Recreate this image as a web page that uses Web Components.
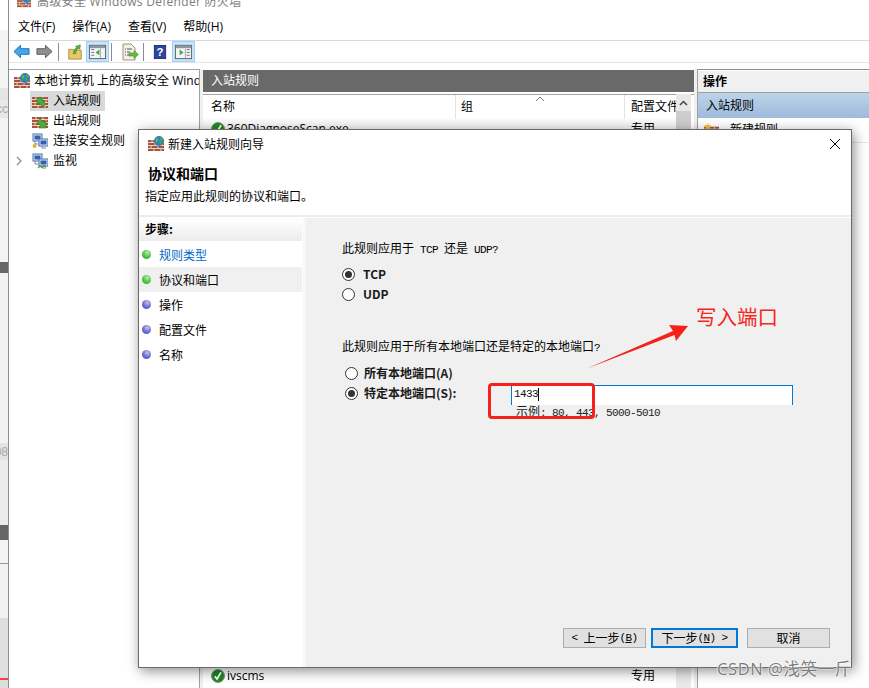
<!DOCTYPE html>
<html lang="zh">
<head>
<meta charset="utf-8">
<title>新建入站规则向导</title>
<style>
  html, body { margin: 0; height: 688px; overflow: hidden; background: #fff; }
  body { display: flex; font: 12px/16px "Open Sans", "Noto Sans CJK SC", sans-serif; color: #000; }
</style>
</head>
<body>
<side-strip></side-strip>
<mmc-window></mmc-window>
<wizard-dialog></wizard-dialog>
<photo-markup></photo-markup>

<script>
const BRICK = `<rect x="0" y="4" width="16" height="11" fill="#a8523a"/>
  <path d="M0 6.5h16M0 9.5h16M0 12.5h16M4 4v2.5M11 4v2.5M7 6.5v3M14 6.5v3M3 9.5v3M10 9.5v3M6 12.5v2.5M13 12.5v2.5" stroke="#e4d3c6" stroke-width="1" fill="none"/>`;
const GLOBE = `<circle cx="11" cy="5" r="5" fill="#2f7fd0"/><path d="M8 1.5c2 .5 3 1.5 2.5 3S8 6 8 7.500M12 .5c1 1.500 3 1.500 3.500 3.500-1.500 1-3.500 0-4 2 .5 1.500 1.500 2 2 3" fill="#5cb848" stroke="#3f9a3a" stroke-width=".7"/>`;
const MONITORS = `<rect x="1" y="1" width="9" height="7" fill="#dfe9f7" stroke="#53719c"/><rect x="2.500" y="2.500" width="6" height="4" fill="#2d62b8"/>
  <rect x="7" y="6" width="9" height="7" fill="#dfe9f7" stroke="#53719c"/><rect x="8.500" y="7.500" width="6" height="4" fill="#2d62b8"/>
  <path d="M3 8v3h4M10 13v2h4" stroke="#7a8aa0" fill="none"/>`;
const PANE = (arrow) => `<rect x="1.500" y="3.500" width="17" height="14" fill="#f4f4f4" stroke="#56606c"/><rect x="2" y="4" width="16" height="2.500" fill="#8a98a8"/>${arrow}`;

const ICONS = {
  root: `<svg viewBox="0 0 16 16">${BRICK}${GLOBE}</svg>`,
  inbound: `<svg viewBox="0 0 16 16">${BRICK}<path d="M5 5h7l-2 2 4 4-3 3-4-4-2 2z" fill="#48ad3c" stroke="#2f7e2a" stroke-width=".6"/></svg>`,
  outbound: `<svg viewBox="0 0 16 16">${BRICK}<path d="M14 15H7l2-2-4-4 3-3 4 4 2-2z" fill="#48ad3c" stroke="#2f7e2a" stroke-width=".6"/></svg>`,
  security: `<svg viewBox="0 0 16 16">${MONITORS}<circle cx="2.500" cy="13" r="2" fill="#d9b53a"/></svg>`,
  monitor: `<svg viewBox="0 0 16 16">${MONITORS}<path d="M6 15l2-2 2 1.500 2-2 2 1.500" stroke="#3f9a3a" stroke-width="1.200" fill="none"/></svg>`,
  newrule: `<svg viewBox="0 0 16 16">${BRICK}<path d="M4 0l1 2.500L8 2 6 4l1 2.500L4 5.500 1 6.500 2 4 0 2l3 .500z" fill="#f2c230"/></svg>`,
  check: `<svg viewBox="0 0 14 14"><circle cx="7" cy="7" r="6.500" fill="#1e8a1e" stroke="#8b938b"/><path d="M3.800 7.300l2.200 2.700L10 3.300" stroke="#fff" stroke-width="1.800" fill="none"/></svg>`,
  back: `<svg viewBox="0 0 18 16"><path d="M1 8l7-6.500V5h9v6H8v3.500z" fill="#46a6e8" stroke="#1c6fb4"/></svg>`,
  forward: `<svg viewBox="0 0 18 16"><path d="M17 8l-7-6.500V5H1v6h9v3.500z" fill="#8e8e8e" stroke="#5c5c5c"/></svg>`,
  up: `<svg viewBox="0 0 16 18"><path d="M1 6h5l1 1h8v10H1z" fill="#e9c76c" stroke="#a9893a"/><path d="M6 11c0-4 2-6 4-7L8.500 2.500 14 1l-.500 5-1.500-1c-2 1-3 3-3 6z" fill="#5fae3e" stroke="#3a822b" stroke-width=".6"/></svg>`,
  treeon: `<svg viewBox="0 0 20 20">${PANE('<path d="M3.500 8h3M3.500 11h3M3.500 14h3" stroke="#66707c"/><path d="M8 11l4-3v6z" fill="#3da84a"/><path d="M13 7v10" stroke="#9aa4ae"/>')}</svg>`,
  doc: `<svg viewBox="0 0 18 18"><path d="M2 1h8l4 4v12H2z" fill="#f4efe0" stroke="#9a9484"/><path d="M4 6h1M4 9h1M4 12h1M6 6h5M6 9h3M6 12h3" stroke="#555"/><path d="M8 10h5V7.500l4.500 4-4.500 4V13H8z" fill="#65bd45" stroke="#3e8f2c" stroke-width=".6"/></svg>`,
  help: `<svg viewBox="0 0 14 16"><rect x=".5" y=".5" width="13" height="15" fill="#2b469c" stroke="#1b2d70"/><text x="7" y="13" text-anchor="middle" font-family="Liberation Sans" font-weight="700" font-size="13" fill="#fff">?</text></svg>`,
  actionpane: `<svg viewBox="0 0 20 20">${PANE('<path d="M13.500 8h3M13.500 11h3M13.500 14h3" stroke="#66707c"/><path d="M6 8l4 3-4 3z" fill="#3da84a"/><path d="M12 7v10" stroke="#9aa4ae"/>')}</svg>`
};

class MmcIcon extends HTMLElement {
  connectedCallback() {
    const size = this.getAttribute('size') || 16;
    this.attachShadow({ mode: 'open' }).innerHTML = `
      <style>
        :host { display: block; flex: none; width: ${size}px; height: ${size}px; }
        svg { display: block; width: 100%; height: 100%; }
      </style>${ICONS[this.getAttribute('name')]}`;
  }
}
customElements.define('mmc-icon', MmcIcon);

// the bit of another window that shows left of the main one
class SideStrip extends HTMLElement {
  connectedCallback() {
    const bands = [
      [30, '#fff'], [58, '#f4f4f4'], [12, '#e4e4e4'], [18, '#e8e8e8', 'cc'], [144, '#f3f3f3'],
      [11, '#666'], [170, '#f2f2f2'], [17, '#e2e2e2', '08'], [65, '#ececec'], [15, '#666'],
      [23, '#f4f4f4'], [1, '#999'], [54, '#f2f2f2'], [60, '#dfdfdf'], [2, '#f0453a'], [8, '#ddd']
    ];
    this.attachShadow({ mode: 'open' }).innerHTML = `
      <style>
        :host { display: flex; flex: none; flex-direction: column; width: 8px; height: 688px; overflow: hidden; }
        i { display: flex; flex: none; justify-content: flex-end; align-items: center; overflow: hidden; font: 12px/14px "Liberation Sans", sans-serif; color: #aaa; }
      </style>
      ${bands.map(([h, c, t]) => `<i style="height:${h}px;background:${c}">${t || ''}</i>`).join('')}`;
  }
}
customElements.define('side-strip', SideStrip);

class MmcWindow extends HTMLElement {
  connectedCallback() {
    this.attachShadow({ mode: 'open' }).innerHTML = `
      <style>
        :host { display: flex; flex-direction: column; flex: 1; height: 688px; overflow: hidden; background: #fff; border-left: 1px solid #8b8b93; box-sizing: border-box; }
        .title { display: flex; flex: none; gap: 6px; height: 24px; padding-left: 8px; margin-top: -6px; color: #7c7c7c; align-items: flex-start; line-height: 16px; }
        .title span { letter-spacing: .3px; }
        .menu { display: flex; flex: none; gap: 17px; height: 20px; padding: 0 0 3px 9px; align-items: center; margin-top: -1px; }
        .tools { display: flex; flex: none; align-items: center; height: 21px; padding-left: 4px; border-top: 1px solid #d9d9d9; border-bottom: 1px solid #e4e4e4; }
        .sep { width: 1px; height: 18px; background: #8c8c8c; flex: none; }
        .on { display: flex; flex: none; width: 23px; height: 21px; align-items: center; justify-content: center; background: #cce4f7; border: 1px solid #99d1ff; box-sizing: border-box; }
        .panes { display: flex; flex: 1; min-height: 0; margin-top: 6px; background: #f0f0f0; gap: 3px; }
        .tree { flex: none; width: 190px; background: #fff; border: solid #a0a0a0; border-width: 1px 1px 0 0; overflow: hidden; white-space: nowrap; }
        .node { display: flex; align-items: center; height: 20px; gap: 5px; }
        .node.root { padding-left: 5px; margin-top: 1px; gap: 4px; }
        .node.kid { padding-left: 23px; }
        .sel { background: #d9d9d9; width: 75px; margin-left: 21px; padding-left: 2px !important; box-sizing: border-box; }
        .expand { display: flex; align-items: center; }
        .expand svg { margin-left: 7px; margin-right: 5px; }
        .list { display: flex; flex-direction: column; flex: none; width: 491px; background: #fff; overflow: hidden; }
        .bar { flex: none; height: 22px; margin-top: 1px; padding-left: 8px; background: #696969; color: #fff; line-height: 22px; }
        .heads { display: flex; flex: none; height: 25px; margin-top: 2px; border-top: 1px solid #a0a0a0; box-sizing: border-box; background: #fff; padding-left: 8px; align-items: center; }
        .heads div { border-left: 1px solid #e3e3e3; height: 24px; line-height: 24px; padding-left: 5px; box-sizing: border-box; }
        .heads .c1 { border: 0; padding: 0; width: 244px; }
        .heads .c2 { width: 169px; position: relative; }
        .heads .c3 { padding-left: 6px; width: 52px; overflow: hidden; white-space: nowrap; }
        .heads svg { position: absolute; top: 1px; left: 79px; }
        .rows { display: flex; flex: 1; min-height: 0; }
        .rowcol { flex: none; width: 473px; display: flex; flex-direction: column; }
        .row { display: flex; align-items: center; height: 20px; padding-left: 8px; background: linear-gradient(#fafafa, #ececec); }
        .row.last { margin-top: auto; background: none; height: 22px; margin-bottom: 1px; }
        .row span.n { width: 404px; padding-left: 2px; }
        .scroll { flex: none; width: 15px; background: #e9e9e9; margin-top: -25px; display: flex; flex-direction: column; position: relative; }
        .scroll .btn { flex: none; height: 17px; background: #e8e8e8; display: flex; align-items: center; justify-content: center; }
        .scroll .thumb { flex: none; height: 60px; background: #cdcdcd; }
        .actions { flex: 1; min-width: 0; background: #fff; border-left: 1px solid #a0a0a0; border-top: 1px solid #8e8e8e; }
        .acthead { height: 21px; margin-top: 1px; background: #f0f0f0; padding-left: 5px; line-height: 21px; font-weight: 700; border-bottom: 1px solid #a0a0a0; }
        .actband { height: 25px; line-height: 25px; padding-left: 8px; background: linear-gradient(#bcd3ea, #9ebbdb); }
        .actitem { display: flex; align-items: center; gap: 11px; height: 24px; padding-left: 6px; border-bottom: 1px solid #e8e8e8; }
      </style>
      <div class="title"><mmc-icon name="root" size="14"></mmc-icon><span>高级安全 Windows Defender 防火墙</span></div>
      <div class="menu"><span>文件(F)</span><span>操作(A)</span><span>查看(V)</span><span>帮助(H)</span></div>
      <div class="tools">
        <mmc-icon name="back" size="17"></mmc-icon>
        <mmc-icon name="forward" size="17" style="margin-left:6px"></mmc-icon>
        <div class="sep" style="margin:0 8px 0 5px"></div>
        <mmc-icon name="up" size="16"></mmc-icon>
        <div class="on" style="margin-left:3px"><mmc-icon name="treeon" size="19"></mmc-icon></div>
        <div class="sep" style="margin:0 9px 0 2px"></div>
        <mmc-icon name="doc" size="18"></mmc-icon>
        <div class="sep" style="margin:0 9px 0 4px"></div>
        <mmc-icon name="help" size="14"></mmc-icon>
        <div class="on" style="margin-left:5px"><mmc-icon name="actionpane" size="19"></mmc-icon></div>
      </div>
      <div class="panes">
        <div class="tree">
          <div class="node root"><mmc-icon name="root"></mmc-icon><span>本地计算机 上的高级安全 Wind</span></div>
          <div class="node kid sel"><mmc-icon name="inbound"></mmc-icon><span>入站规则</span></div>
          <div class="node kid"><mmc-icon name="outbound"></mmc-icon><span>出站规则</span></div>
          <div class="node kid"><mmc-icon name="security"></mmc-icon><span>连接安全规则</span></div>
          <div class="node expand"><svg width="6" height="10" viewBox="0 0 6 10"><path d="M1 1l4 4-4 4" stroke="#8a8a8a" stroke-width="1.200" fill="none"/></svg><mmc-icon name="monitor"></mmc-icon><span>监视</span></div>
        </div>
        <div class="list">
          <div class="bar">入站规则</div>
          <div class="heads">
            <div class="c1">名称</div>
            <div class="c2">组<svg width="10" height="6" viewBox="0 0 10 6"><path d="M1 5l4-4 4 4" stroke="#777" fill="none"/></svg></div>
            <div class="c3">配置文件</div>
          </div>
          <div class="rows">
            <div class="rowcol">
              <div class="row"><mmc-icon name="check" size="14"></mmc-icon><span class="n">360DiagnoseScan.exe</span><span>专用</span></div>
              <div class="row last"><mmc-icon name="check" size="14"></mmc-icon><span class="n">ivscms</span><span>专用</span></div>
            </div>
            <div class="scroll">
              <div class="btn"><svg width="9" height="6" viewBox="0 0 9 6"><path d="M1 5l3.500-3.500L8 5" stroke="#444" stroke-width="1.500" fill="none"/></svg></div>
              <div class="thumb"></div>
            </div>
          </div>
        </div>
        <div class="actions">
          <div class="acthead">操作</div>
          <div class="actband">入站规则</div>
          <div class="actitem"><mmc-icon name="newrule" size="15"></mmc-icon><span>新建规则...</span></div>
        </div>
      </div>`;
  }
}
customElements.define('mmc-window', MmcWindow);

class WizardStep extends HTMLElement {
  connectedCallback() {
    const state = this.getAttribute('state');
    const green = state === 'done' || state === 'current';
    const dot = green ? 'radial-gradient(circle at 60% 30%, #b4eeaa, #44c43a 55%, #35a82e)' : 'radial-gradient(circle at 60% 30%, #c3c3f0, #6868d0 55%, #5656b8)';
    this.attachShadow({ mode: 'open' }).innerHTML = `
      <style>
        :host { display: flex; align-items: center; gap: 8px; height: 25px; padding-left: 3px; box-sizing: border-box; margin-right: 1px; }
        :host([state="current"]) { background: #f0f0f0; }
        :host([state="done"]) { color: #0066cc; }
        i { display: block; width: 9px; height: 9px; border-radius: 50%; background: ${dot}; }
      </style><i></i><slot></slot>`;
  }
}
customElements.define('wizard-step', WizardStep);

class RadioOption extends HTMLElement {
  connectedCallback() {
    this.attachShadow({ mode: 'open' }).innerHTML = `
      <style>
        :host { display: flex; align-items: center; gap: var(--radio-gap, 8px); height: 20px; font-weight: 700; color: #1a1a1a; }
        i { display: flex; flex: none; align-items: center; justify-content: center; width: 13px; height: 13px; box-sizing: border-box; border: 1px solid #333; border-radius: 50%; background: #fff; }
        :host([checked]) i::after { content: ""; width: 7px; height: 7px; border-radius: 50%; background: #333; }
      </style><i></i><slot></slot>`;
  }
}
customElements.define('radio-option', RadioOption);

class WizardButton extends HTMLElement {
  connectedCallback() {
    this.attachShadow({ mode: 'open' }).innerHTML = `
      <style>
        :host { display: flex; align-items: center; justify-content: center; height: 20px; box-sizing: border-box; background: #e1e1e1; border: 1px solid #adadad; white-space: nowrap; }
        :host([primary]) { border: 2px solid #0078d7; }
      </style><slot></slot>`;
  }
}
customElements.define('wizard-button', WizardButton);

class WizardDialog extends HTMLElement {
  connectedCallback() {
    this.attachShadow({ mode: 'open' }).innerHTML = `
      <style>
        :host { position: absolute; left: 138px; top: 129px; width: 714px; height: 539px; box-sizing: border-box; display: flex; flex-direction: column; background: #fff; border: 1px solid #6a6a6a; box-shadow: 2px 3px 12px rgba(0,0,0,.45); font: 12px/16px "Noto Sans CJK SC", sans-serif; }
        .a { font: 11px/16px "Liberation Mono", monospace; letter-spacing: -.6px; white-space: pre; }
        .cap { display: flex; flex: none; align-items: center; gap: 4px; height: 28px; padding: 0 10px 0 9px; }
        .cap span { flex: 1; }
        h1 { margin: 0; flex: none; font-size: 14px; line-height: 20px; font-weight: 700; padding: 5px 0 0 9px; }
        .sub { flex: none; padding: 5px 0 0 6px; height: 32px; box-sizing: border-box; }
        .body { display: flex; flex: 1; min-height: 0; border-top: 2px solid #ececec; padding-top: 1px; }
        .steps { flex: none; width: 164px; border-right: 3px solid #f7f7f7; }
        .steps b { display: block; height: 23px; margin-bottom: 1px; padding-left: 6px; line-height: 22px; background: linear-gradient(#fff, #ececec); margin-right: 1px; }
        .panel { display: flex; flex-direction: column; flex: 1; min-width: 0; background: #f0f0f0; padding: 22px 21px 19px 36px; }
        .q1 { margin-bottom: 6px; }
        .q2 { margin: 34px 0 7px; }
        .opts { padding-left: 3px; --radio-gap: 6px; }
        .ports { display: flex; align-items: flex-start; }
        .ports radio-option { flex: none; width: 166px; }
        .field { flex: none; width: 282px; margin-top: 2px; }
        .input { display: flex; align-items: center; height: 20px; box-sizing: border-box; background: #fff; border: 1px solid #0078d7; border-bottom: 0; padding: 0 0 3px 2px; color: #111; }
        .caret { width: 1px; height: 13px; background: #000; }
        .hint { padding-left: 5px; line-height: 11px; color: #222; }
        .btns { display: flex; gap: 5px; margin-top: auto; justify-content: flex-end; }
        .btns wizard-button:nth-child(1) { width: 83px; }
        .btns wizard-button:nth-child(2) { width: 87px; margin-right: 4px; }
        .btns wizard-button:nth-child(3) { width: 83px; }
      </style>
      <div class="cap">
        <mmc-icon name="root"></mmc-icon>
        <span>新建入站规则向导</span>
        <svg width="12" height="12" viewBox="0 0 12 12"><path d="M1 1l10 10M11 1L1 11" stroke="#111" fill="none"/></svg>
      </div>
      <h1>协议和端口</h1>
      <div class="sub">指定应用此规则的协议和端口。</div>
      <div class="body">
        <div class="steps">
          <b>步骤:</b>
          <wizard-step state="done">规则类型</wizard-step>
          <wizard-step state="current">协议和端口</wizard-step>
          <wizard-step>操作</wizard-step>
          <wizard-step>配置文件</wizard-step>
          <wizard-step>名称</wizard-step>
        </div>
        <div class="panel">
          <div class="q1">此规则应用于<span class="a"> TCP </span>还是<span class="a"> UDP?</span></div>
          <radio-option checked>TCP</radio-option>
          <radio-option>UDP</radio-option>
          <div class="q2">此规则应用于所有本地端口还是特定的本地端口<span class="a">?</span></div>
          <div class="opts">
            <radio-option>所有本地端口(A)</radio-option>
            <div class="ports">
              <radio-option checked>特定本地端口(S):</radio-option>
              <div class="field">
                <div class="input"><span class="a">1433</span><span class="caret"></span></div>
                <div class="hint">示例<span class="a">: 80, 443, 5000-5010</span></div>
              </div>
            </div>
          </div>
          <div class="btns">
            <wizard-button><span class="a">&lt; </span>上一步<span class="a">(<u>B</u>)</span></wizard-button>
            <wizard-button primary>下一步<span class="a">(<u>N</u>) &gt;</span></wizard-button>
            <wizard-button>取消</wizard-button>
          </div>
        </div>
      </div>`;
  }
}
customElements.define('wizard-dialog', WizardDialog);

// red annotations and the watermark painted over the screenshot
class PhotoMarkup extends HTMLElement {
  connectedCallback() {
    this.attachShadow({ mode: 'open' }).innerHTML = `
      <style>
        :host { position: absolute; inset: 0; pointer-events: none; }
        .box { position: absolute; left: 488px; top: 383px; width: 107px; height: 36px; box-sizing: border-box; border: 3px solid #f5211b; border-radius: 4px; }
        svg { position: absolute; left: 0; top: 0; }
        .note { position: absolute; left: 696px; top: 302px; font: 20.5px/28px "Noto Sans CJK SC", sans-serif; color: #f5261c; white-space: nowrap; }
        .mark { position: absolute; left: 717px; top: 659px; font: 16.5px/20px "Open Sans", "Noto Sans CJK SC", sans-serif; letter-spacing: .6px; color: rgba(100,100,100,.85); text-shadow: 0 0 2px #fff, 0 0 2px #fff; white-space: nowrap; }
      </style>
      <div class="box"></div>
      <svg width="869" height="688"><path d="M587 368.500L673 331 669 325 688 326 676 341 674.500 335z" fill="#f5211b"/></svg>
      <div class="note">写入端口</div>
      <div class="mark">CSDN @浅笑一斤</div>`;
  }
}
customElements.define('photo-markup', PhotoMarkup);
</script>
</body>
</html>
